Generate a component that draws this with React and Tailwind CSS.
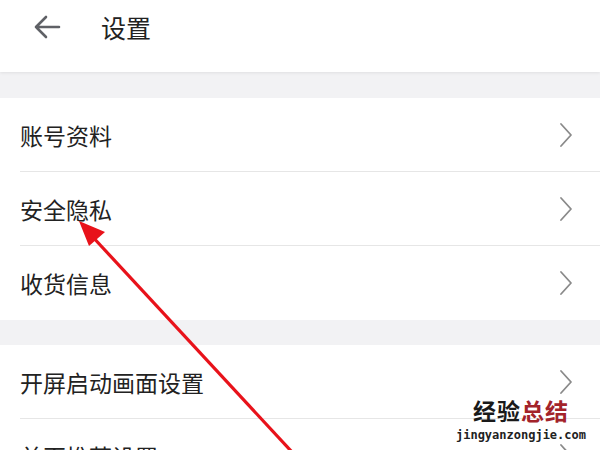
import React from "react";

const font = { fontFamily: '"Noto Sans CJK SC", "Noto Sans", sans-serif' };

function Chevron() {
  return (
    <svg width="16" height="26" viewBox="0 0 16 26" fill="none">
      <path d="M3 2 L13 13 L3 24" stroke="#8a8a8a" strokeWidth="1.8" strokeLinecap="round" strokeLinejoin="round" />
    </svg>
  );
}

function Row({ label, last }) {
  return (
    <div className="flex items-center h-[74px] pl-5 relative bg-white">
      <span className="text-[23px] text-[#222] leading-none">{label}</span>
      <div className="ml-auto mr-[26px]">
        <Chevron />
      </div>
      {!last && <div className="absolute left-5 right-0 bottom-0 h-px bg-[#e6e6e6]" />}
    </div>
  );
}

export default function App() {
  return (
    <div className="w-[600px] h-[450px] overflow-hidden relative bg-[#f2f2f4]" style={font}>
      {/* Header */}
      <div className="h-[72px] bg-white shadow-[0_1px_3px_rgba(0,0,0,0.08)] relative z-10">
        <div className="h-[54px] flex items-center">
          <svg className="ml-[33px]" width="28" height="24" viewBox="0 0 28 24" fill="none">
            <path d="M26 12 H3 M13 2 L3 12 L13 22" stroke="#5f6166" strokeWidth="2.6" strokeLinecap="round" strokeLinejoin="round" />
          </svg>
          <span className="ml-[40px] text-[25px] text-[#222] leading-none">设置</span>
        </div>
      </div>

      <div className="h-[26px]" />
      <div className="bg-white">
        <Row label="账号资料" />
        <Row label="安全隐私" />
        <Row label="收货信息" last />
      </div>
      <div className="h-[25px]" />
      <div className="bg-white">
        <Row label="开屏启动画面设置" />
        <Row label="首页推荐设置" last />
      </div>

      {/* red arrow */}
      <svg className="absolute left-0 top-0 pointer-events-none" width="600" height="450">
        <line x1="292" y1="452" x2="90" y2="234" stroke="#e8121a" strokeWidth="3.2" />
        <polygon points="79,221 105,232 89,246" fill="#e8121a" />
      </svg>

      {/* watermark */}
      <div className="absolute right-[14px] bottom-[9px] flex flex-col items-center">
        <div className="text-[23px] font-bold leading-none tracking-[1px]">
          <span className="text-[#1a1a1a]">经验</span>
          <span className="text-[#a3232a]">总结</span>
        </div>
        <div className="text-[12px] font-bold text-[#222] leading-none mt-[7px]" style={{ fontFamily: '"DejaVu Sans Mono", monospace' }}>
          jingyanzongjie.com
        </div>
      </div>
    </div>
  );
}
